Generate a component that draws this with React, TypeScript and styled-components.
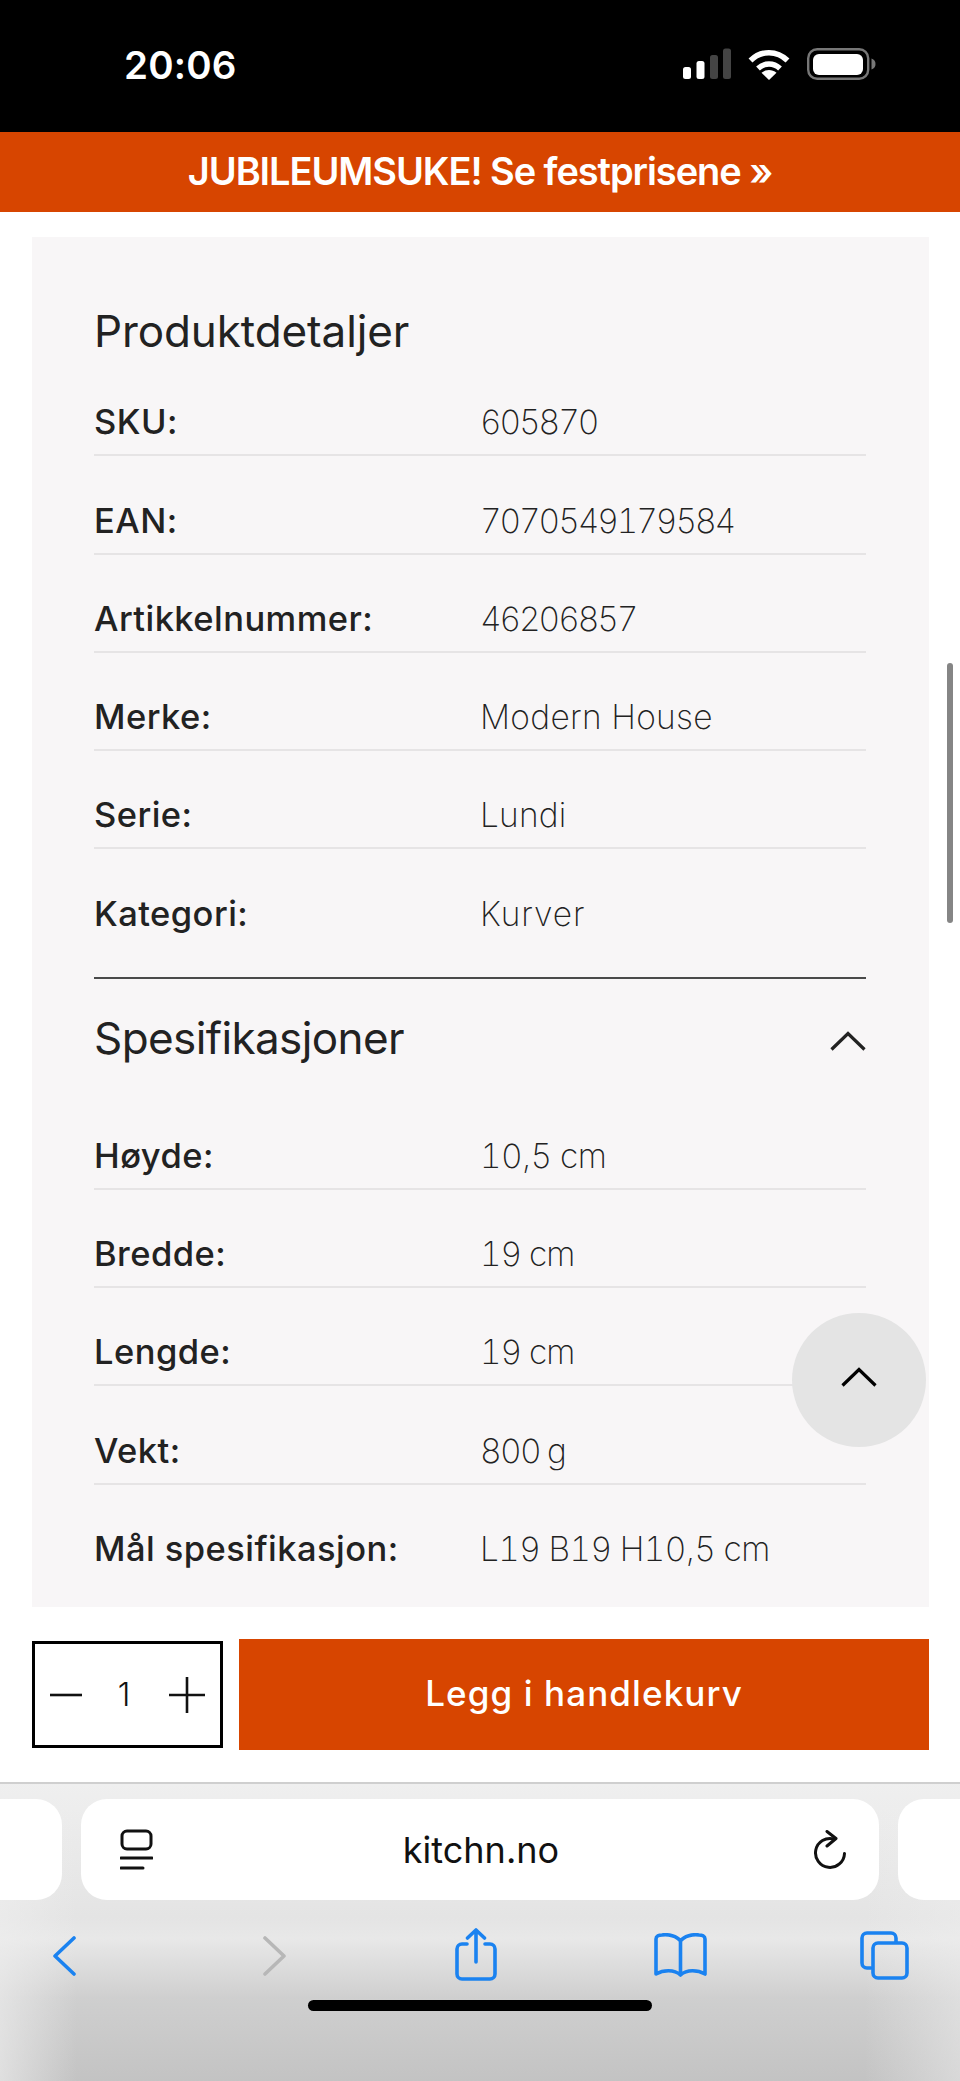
import React from "react";
import styled, { createGlobalStyle } from "styled-components";

const ORANGE = "#d74500";
const BLUE = "#1a82f0";
const FONT = `Inter, "Liberation Sans", sans-serif`;

const GlobalStyle = createGlobalStyle`
  html, body {
    margin: 0;
    padding: 0;
    background: #fff;
    font-family: ${FONT};
  }
  * {
    box-sizing: border-box;
  }
`;

const Phone = styled.div`
  position: relative;
  width: 960px;
  height: 2081px;
  overflow: hidden;
  display: flex;
  flex-direction: column;
  background: #fff;
`;

const StatusBar = styled.div`
  height: 132px;
  background: #000;
  color: #fff;
  display: flex;
  align-items: flex-start;
  justify-content: space-between;
  padding: 48px 84px 0 124px;
`;

const Time = styled.div`
  font-size: 38.5px;
  line-height: 34px;
  font-weight: 600;
  letter-spacing: 0.2px;
`;

const StatusIcons = styled.div`
  display: flex;
  gap: 17px;
  align-items: flex-start;
`;

const Banner = styled.div`
  height: 80px;
  padding-bottom: 2px;
  background: ${ORANGE};
  color: #fff;
  display: flex;
  align-items: center;
  justify-content: center;
  font-size: 38px;
  font-weight: 600;
  letter-spacing: -1.07px;
`;

const Content = styled.div`
  padding: 25px 31px 0 32px;
`;

const Panel = styled.div`
  background: #f8f6f7;
  height: 1370px;
  padding: 67px 63px 0 62px;
  color: #222;
`;

const Heading = styled.h2<{ $tracking: number }>`
  margin: 0;
  font-size: 44px;
  line-height: 54px;
  font-weight: 400;
  letter-spacing: ${(p) => p.$tracking}px;
`;

const SpecHeader = styled.div`
  display: flex;
  align-items: center;
  justify-content: space-between;
  border-top: 2px solid #4a4a4a;
  margin-top: 29px;
  padding-top: 32px;
  margin-bottom: 27px;
`;

const Chevron = styled.svg`
  display: block;
  width: 36px;
  height: 20px;
  fill: none;
  stroke: currentColor;
  stroke-width: 3.2;
`;

const HeaderChevron = styled(Chevron)`
  margin-top: 6px;
`;

const Row = styled.div<{ $last?: boolean }>`
  height: 98.26px;
  display: grid;
  grid-template-columns: 386px 1fr;
  align-items: end;
  padding-bottom: 12px;
  border-bottom: 2px solid ${(p) => (p.$last ? "transparent" : "#e6e4e5")};
`;

const Label = styled.div`
  font-size: 34.5px;
  line-height: 40px;
  font-weight: 450;
  letter-spacing: 0.45px;
`;

const Value = styled.div<{ $tracking: number }>`
  font-size: 33.5px;
  line-height: 40px;
  font-weight: 250;
  letter-spacing: ${(p) => p.$tracking}px;
  font-variant-numeric: tabular-nums;
`;

const ActionBar = styled.div`
  height: 175px;
  padding: 32px 31px 0 32px;
  display: flex;
  align-items: flex-start;
  gap: 16px;
`;

const Qty = styled.div`
  width: 191px;
  height: 107px;
  margin-top: 2px;
  border: 3px solid #000;
  display: flex;
  align-items: center;
  justify-content: space-between;
  padding: 0 15px 0 14px;
  color: #111;
`;

const QtyIcon = styled.svg`
  display: block;
  width: 36px;
  height: 36px;
  stroke: currentColor;
  stroke-width: 2.6;
  fill: none;
`;

const QtyValue = styled.span`
  font-size: 32px;
  font-weight: 300;
  margin-right: 6px;
`;

const AddButton = styled.button`
  flex: 1;
  height: 111px;
  border: 0;
  padding: 0 0 3px;
  background: ${ORANGE};
  color: #fff;
  font-family: ${FONT};
  font-size: 35px;
  font-weight: 450;
  letter-spacing: 1.1px;
`;

const Safari = styled.div`
  flex: 1;
  position: relative;
  border-top: 2px solid #cfcfcf;
  padding-top: 15px;
  background:
    linear-gradient(90deg, rgba(238, 238, 238, 0.65), rgba(238, 238, 238, 0) 8%, rgba(238, 238, 238, 0) 90%, rgba(238, 238, 238, 0.5)),
    linear-gradient(180deg, #efefef 0%, #e4e4e4 45%, #e8e8e8 52%, #cfcfcf 72%, #c3c3c3 100%);
`;

const Tabs = styled.div`
  display: flex;
  gap: 19px;
  height: 101px;
`;

const SidePill = styled.div<{ $side: "left" | "right" }>`
  background: #fff;
  width: 62px;
  border-radius: ${(p) => (p.$side === "left" ? "0 26px 26px 0" : "26px 0 0 26px")};
`;

const AddressPill = styled.div`
  width: 798px;
  background: #fff;
  border-radius: 26px;
  display: flex;
  align-items: center;
  justify-content: space-between;
  padding: 0 32px 0 39px;
`;

const Domain = styled.div`
  font-size: 36px;
  line-height: 44px;
  margin-right: 4px;
  color: #111;
  font-weight: 400;
`;

const Toolbar = styled.div`
  display: flex;
  align-items: flex-start;
  height: 100px;
  padding: 28px 0 0 53px;
`;

const ToolSlot = styled.div<{ $gap: number; $top: number; $color: string }>`
  margin-left: ${(p) => p.$gap}px;
  margin-top: ${(p) => p.$top}px;
  color: ${(p) => p.$color};
`;

const ToolIcon = styled.svg`
  display: block;
  fill: none;
  stroke: currentColor;
  stroke-width: 3.6;
  stroke-linecap: round;
  stroke-linejoin: round;
`;

const PillIcon = styled(ToolIcon)`
  color: #111;
  stroke-width: 3;
`;

const HomeBar = styled.div`
  width: 344px;
  height: 11px;
  margin: 0 auto;
  border-radius: 6px;
  background: #000;
`;

const Scrollbar = styled.div`
  position: absolute;
  top: 663px;
  right: 7px;
  width: 6.5px;
  height: 260px;
  border-radius: 4px;
  background: #858585;
`;

const ScrollTop = styled.button`
  position: absolute;
  top: 1313px;
  left: 792px;
  width: 134px;
  height: 134px;
  border: 0;
  border-radius: 50%;
  background: #e4e4e4;
  color: #000;
  display: flex;
  align-items: center;
  justify-content: center;
  padding: 0 0 6px;
`;

type Spec = { label: string; value: string; tracking: number };

const productRows: Spec[] = [
  { label: "SKU:", value: "605870", tracking: -2.1 },
  { label: "EAN:", value: "7070549179584", tracking: -2.1 },
  { label: "Artikkelnummer:", value: "46206857", tracking: -2.1 },
  { label: "Merke:", value: "Modern House", tracking: 0.3 },
  { label: "Serie:", value: "Lundi", tracking: 0.2 },
  { label: "Kategori:", value: "Kurver", tracking: 0.9 },
];

const specRows: Spec[] = [
  { label: "Høyde:", value: "10,5 cm", tracking: -0.6 },
  { label: "Bredde:", value: "19 cm", tracking: -1.1 },
  { label: "Lengde:", value: "19 cm", tracking: -1.1 },
  { label: "Vekt:", value: "800 g", tracking: -1.7 },
  { label: "Mål spesifikasjon:", value: "L19 B19 H10,5 cm", tracking: -0.65 },
];

const ChevronUp = () => <path d="M1.5 18.5 L18 2.5 L34.5 18.5" />;

const Signal = () => (
  <svg width="49" height="32" viewBox="0 0 49 32">
    <rect x="1" y="19" width="8" height="12" rx="2.5" fill="#fff" />
    <rect x="14.5" y="13" width="8" height="18" rx="2.5" fill="#fff" />
    <rect x="28" y="7" width="8" height="24" rx="2.5" fill="#444" />
    <rect x="41" y="0.5" width="8" height="30.5" rx="2.5" fill="#444" />
  </svg>
);

const Wifi = () => (
  <svg width="42" height="32" viewBox="0 0 42 32" fill="none" stroke="#fff" strokeWidth="5.5">
    <path d="M2.5 12.5 C13 2 29 2 39.5 12.5" />
    <path d="M10 20.5 C16.5 14.5 25.5 14.5 32 20.5" />
    <path d="M21 32 L13.5 24.8 C18 21 24 21 28.5 24.8 Z" fill="#fff" stroke="none" />
  </svg>
);

const Battery = () => (
  <svg width="69" height="32" viewBox="0 0 69 32">
    <rect x="1.2" y="1.2" width="60" height="29.6" rx="9" fill="none" stroke="#777" strokeWidth="2.4" />
    <rect x="6" y="6" width="50" height="21" rx="6" fill="#fff" />
    <path d="M64.5 10.5 C67.5 11.5 68.5 13.5 68.5 16 C68.5 18.5 67.5 20.5 64.5 21.5 Z" fill="#777" />
  </svg>
);

const SpecRows = ({ rows }: { rows: Spec[] }) => (
  <>
    {rows.map((row, i) => (
      <Row key={row.label} $last={i === rows.length - 1}>
        <Label>{row.label}</Label>
        <Value $tracking={row.tracking}>{row.value}</Value>
      </Row>
    ))}
  </>
);

const App = () => {
  return (
    <Phone>
      <GlobalStyle />
      <StatusBar>
        <Time>20:06</Time>
        <StatusIcons>
          <Signal />
          <Wifi />
          <Battery />
        </StatusIcons>
      </StatusBar>
      <Banner>JUBILEUMSUKE! Se festprisene »</Banner>

      <Content>
        <Panel>
          <Heading $tracking={-0.1}>Produktdetaljer</Heading>
          <SpecRows rows={productRows} />
          <SpecHeader>
            <Heading $tracking={-0.6}>Spesifikasjoner</Heading>
            <HeaderChevron viewBox="0 0 36 20">
              <ChevronUp />
            </HeaderChevron>
          </SpecHeader>
          <SpecRows rows={specRows} />
        </Panel>
      </Content>

      <ActionBar>
        <Qty>
          <QtyIcon viewBox="0 0 36 36">
            <path d="M1 18 H33" />
          </QtyIcon>
          <QtyValue>1</QtyValue>
          <QtyIcon viewBox="0 0 36 36">
            <path d="M0 18 H36 M18 0 V36" />
          </QtyIcon>
        </Qty>
        <AddButton>Legg i handlekurv</AddButton>
      </ActionBar>

      <Safari>
        <Tabs>
          <SidePill $side="left" />
          <AddressPill>
            <PillIcon width="33" height="41" viewBox="0 0 33 41">
              <rect x="2" y="2" width="29" height="18" rx="5" />
              <path d="M1 29 H32" />
              <path d="M1 39 H23" />
            </PillIcon>
            <Domain>kitchn.no</Domain>
            <PillIcon width="34" height="39" viewBox="0 0 34 39">
              <path d="M21 9 A14.5 14.5 0 1 0 31.5 23.5" />
              <path d="M14 1.5 L23 8.5 L14 16" />
            </PillIcon>
          </AddressPill>
          <SidePill $side="right" />
        </Tabs>
        <Toolbar>
          <ToolSlot $gap={0} $top={8} $color={BLUE}>
            <ToolIcon width="23" height="40" viewBox="0 0 23 40">
              <path d="M21 2 L2 20 L21 38" />
            </ToolIcon>
          </ToolSlot>
          <ToolSlot $gap={187} $top={8} $color="#b7b7b7">
            <ToolIcon width="23" height="40" viewBox="0 0 23 40">
              <path d="M2 2 L21 20 L2 38" />
            </ToolIcon>
          </ToolSlot>
          <ToolSlot $gap={169} $top={0} $color={BLUE}>
            <ToolIcon width="42" height="53" viewBox="0 0 42 53">
              <path d="M12 16 H7 a5 5 0 0 0 -5 5 V46 a5 5 0 0 0 5 5 H35 a5 5 0 0 0 5 -5 V21 a5 5 0 0 0 -5 -5 H30" />
              <path d="M21 34 V2 M12.5 10 L21 2 L29.5 10" />
            </ToolIcon>
          </ToolSlot>
          <ToolSlot $gap={157} $top={5} $color={BLUE}>
            <ToolIcon width="53" height="44" viewBox="0 0 53 44">
              <path d="M26.5 41 V8 C23 3 14 1 8 2 C5 2 2 3 2 6 V41 C9 37 20 36 26.5 42 C33 36 44 37 51 41 V6 C51 3 48 2 45 2 C39 1 30 3 26.5 8" />
            </ToolIcon>
          </ToolSlot>
          <ToolSlot $gap={153} $top={3} $color={BLUE}>
            <ToolIcon width="49" height="49" viewBox="0 0 49 49">
              <path d="M11 37 H7 a5 5 0 0 1 -5 -5 V7 a5 5 0 0 1 5 -5 H31 a5 5 0 0 1 5 5 V11" />
              <rect x="13" y="12" width="34" height="35" rx="5" />
            </ToolIcon>
          </ToolSlot>
        </Toolbar>
        <HomeBar />
      </Safari>

      <Scrollbar />
      <ScrollTop aria-label="Til toppen">
        <Chevron viewBox="0 0 36 20">
          <ChevronUp />
        </Chevron>
      </ScrollTop>
    </Phone>
  );
};

export default App;
